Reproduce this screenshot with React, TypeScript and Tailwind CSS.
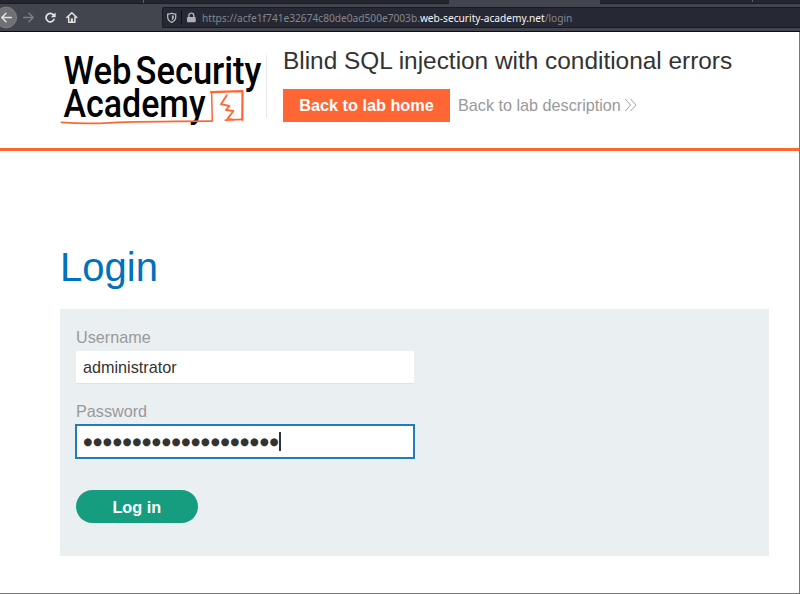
import React from "react";

function BrowserBar() {
  return (
    <div className="h-8 w-full bg-[#42454d]">
      <div className="flex h-1 border-b border-[#1b1d25] bg-[#23252f]">
        <div className="w-[144px] border-r border-[#5b5e66]" />
        <div className="w-[152px]" />
        <div className="w-[153px]" />
        <div className="h-1 w-[151px] bg-[#42454d]" />
        <div className="h-[2px] w-[153px] border-r border-[#5b5e66]" />
      </div>
      <div className="flex h-[28px] border-b border-[#0c0d12]">
        <svg width="162" height="27" viewBox="0 4 162 27" fill="none" stroke="#e4e4e2" strokeWidth="1.5" strokeLinecap="round" strokeLinejoin="round">
          <circle cx="6.2" cy="17.5" r="10.4" fill="#6f7174" stroke="#85868a" strokeWidth="0.8" />
          <path d="M11.3 17.5H1.8M6 13.3L1.8 17.5L6 21.7" />
          <path d="M23.7 17.5H33.2M29 13.3L33.2 17.5L29 21.7" stroke="#7c7f83" />
          <path d="M53.4 14.9A4.2 4.2 0 1 0 54 19.5" strokeWidth="1.7" />
          <path d="M55.6 12.6V17.2H50.8Z" fill="#e4e4e2" stroke="none" />
          <path d="M66.8 17.5L71.8 12.7L76.8 17.5M68.7 17V22.2H74.9V17" />
          <path d="M70.8 18.4H72.9V22.5H70.8Z" fill="#e4e4e2" stroke="none" />
        </svg>
        <div className="mt-[3px] flex h-[21px] flex-1 items-center rounded-l-[2px] border border-r-0 border-[#191b23] bg-[#262934]">
          <svg width="39" height="19" viewBox="163 8 39 19" fill="none">
            <path d="M171.7 13.2C173 13.9 174.3 14.1 175.7 14.2V17.2C175.7 19.5 174.2 21.2 171.7 22.3C169.2 21.2 167.7 19.5 167.7 17.2V14.2C169.1 14.1 170.4 13.9 171.7 13.2Z" stroke="#b8b8ba" strokeWidth="1.3" />
            <path d="M171.9 15.2V20.4C173.2 19.5 173.8 18.6 173.8 17V15.8Z" fill="#b8b8ba" />
            <path d="M181.5 10V25" stroke="#0f1118" />
            <rect x="187" y="17" width="8.7" height="5.3" rx="0.7" fill="#b1b1b3" />
            <path d="M188.9 17V15.6A2.45 2.45 0 0 1 193.8 15.6V17" stroke="#b1b1b3" strokeWidth="1.4" />
          </svg>
          <span className="whitespace-nowrap pt-px font-['Noto_Sans',sans-serif] text-[10.17px] leading-[19px] text-[#85868c]">
            https://acfe1f741e32674c80de0ad500e7003b.<span className="text-[#f5f5f5]">web-security-academy.net</span>/login
          </span>
        </div>
      </div>
    </div>
  );
}

function Logo() {
  return (
    <svg width="206" height="80" viewBox="60 50 206 80" className="shrink-0">
      <g fill="#000" fontFamily="Roboto, sans-serif" fontWeight="500" fontSize="38">
        <text x="63.5" y="83.6" textLength="68" lengthAdjust="spacingAndGlyphs">Web</text>
        <text x="135.5" y="83.6" textLength="126" lengthAdjust="spacingAndGlyphs">Security</text>
        <text x="63.5" y="116.8" textLength="142" lengthAdjust="spacingAndGlyphs">Academy</text>
      </g>
      <g fill="none" stroke="#ff6633" strokeLinejoin="round" strokeLinecap="round">
        <path d="M61.5 122.4Q85 124 110 122.8T211.5 121.2" strokeWidth="1.7" />
        <path d="M212.3 121L211.6 92.5" strokeWidth="1.5" />
        <path d="M211 92.2L242.5 91.2L242.3 119.8" strokeWidth="2.2" />
        <path d="M225.5 120.2L242.5 119.4" strokeWidth="1.8" />
        <path d="M226.8 95.3L221 104.2L229.4 106L226 110L233.4 111L227.6 118.6L232.8 119.6" strokeWidth="1.8" />
      </g>
    </svg>
  );
}

export default function App() {
  return (
    <div className="relative h-[594px] w-[800px] overflow-hidden bg-white font-['Liberation_Sans',sans-serif] text-base text-[#333332]">
      <BrowserBar />
      <header className="flex h-[119px] border-b-[3px] border-[#ff6633] pl-[60px] pt-[18px]">
        <Logo />
        <div className="mt-[5px] h-[63px] w-px shrink-0 bg-[#e8e8e8]" />
        <div className="ml-4">
          <h2 className="-mt-[5px] whitespace-nowrap text-[24.4px] leading-[32px]">Blind SQL injection with conditional errors</h2>
          <div className="mt-[12px] flex items-center">
            <button className="h-[33px] w-[167px] bg-[#ff6633] text-[16.25px] font-bold text-white">Back to lab home</button>
            <a className="ml-2 flex items-center whitespace-nowrap text-[16.2px] text-[#999]">
              Back to lab description
              <svg width="14" height="14" viewBox="0 0 14 14" className="ml-[3px]" fill="none" stroke="#999" strokeWidth="0.9">
                <path d="M1.3 1L6.6 7L1.3 13M6.6 1L12 7L6.6 13" />
              </svg>
            </a>
          </div>
        </div>
      </header>
      <main className="pl-[60px] pt-[92px]">
        <h1 className="text-[40px] leading-[48px] text-[#0071bc]">Login</h1>
        <form className="mt-[18px] h-[247px] w-[709px] bg-[#eaeff2] pl-4 pt-[18px]">
          <label className="block text-[16.2px] leading-[21px] text-[#999]">Username</label>
          <div className="mt-[3px] flex h-[33px] w-[338px] items-center border-b border-[#dfe3e5] bg-white pl-[7px] text-[16.2px] leading-[18px]">administrator</div>
          <label className="mt-4 block text-[16.2px] leading-[23px] text-[#999]">Password</label>
          <div className="-ml-px mt-px flex h-[35px] w-[340px] items-center border-2 border-[#1f7dbc] bg-white pl-[6.5px]">
            <span className="whitespace-nowrap font-['DejaVu_Sans',sans-serif] text-[10.2px] leading-[20px] tracking-[0.91px]">●●●●●●●●●●●●●●●●●●●●</span>
            <span className="h-[19px] w-[1.5px] bg-[#333332]" />
          </div>
          <button type="button" className="mt-[31px] h-[33px] w-[121.5px] rounded-full bg-[#169c7f] pt-px text-[16.25px] font-bold text-white">Log in</button>
        </form>
      </main>
      <div className="pointer-events-none absolute bottom-0 right-0 top-8 w-full border-b border-r border-[#77777a]" />
    </div>
  );
}
